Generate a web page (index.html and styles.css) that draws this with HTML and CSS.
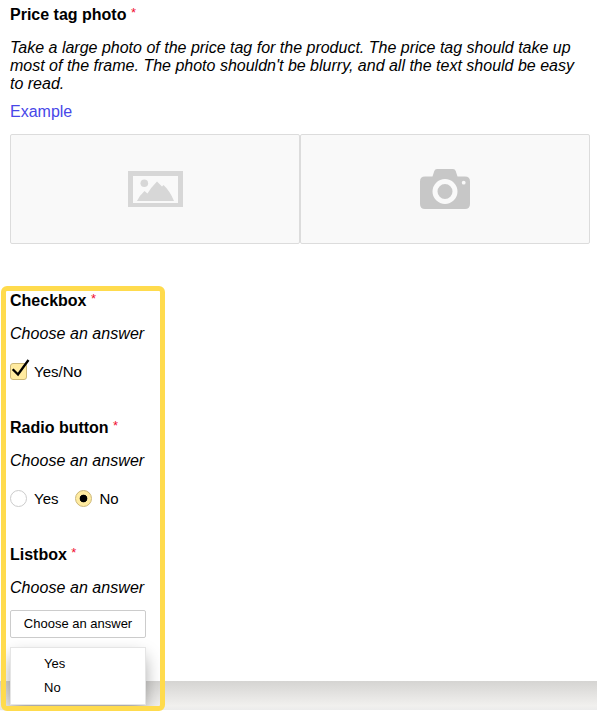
FILE: index.html
```
<!DOCTYPE html>
<html lang="en">
<head>
<meta charset="utf-8">
<title>Price tag photo</title>
<link rel="stylesheet" href="styles.css">
</head>
<body>
<main class="task">
  <section class="field">
    <h2 class="title">Price tag photo <span class="required">*</span></h2>
    <p class="hint">Take a large photo of the price tag for the product. The price tag should take up most of the frame. The photo shouldn't be blurry, and all the text should be easy to read.</p>
    <a class="example">Example</a>
    <div class="upload">
      <div class="tile">
        <svg width="55" height="36" viewBox="0 0 55 36">
          <path fill="#d7d7d7" fill-rule="evenodd" d="M0 0H55V36H0ZM5 5V32H50V5Z"/>
          <circle cx="16.3" cy="12.3" r="3.8" fill="#d7d7d7"/>
          <path fill="#d7d7d7" d="M9 30Q12 24 16.500 20L19.500 22.500Q23 16.500 29 10.500L34 15.500L35.500 14Q42 20 46 30Z"/>
        </svg>
      </div>
      <div class="tile">
        <svg width="50" height="40" viewBox="0 0 50 40">
          <path fill="#c7c7c7" d="M17 0H33Q35 0 35.700 2L37.500 7.500H45Q50 7.500 50 12.500V35Q50 40 45 40H5Q0 40 0 35V12.500Q0 7.500 5 7.500H12.500L14.300 2Q15 0 17 0Z"/>
          <circle cx="25" cy="22.500" r="10" fill="none" stroke="#f9f9f9" stroke-width="5"/>
          <circle cx="43.700" cy="13.700" r="1.900" fill="#f9f9f9"/>
        </svg>
      </div>
    </div>
  </section>

  <div class="questions">
    <section class="field question">
      <h2 class="title">Checkbox <span class="required">*</span></h2>
      <p class="hint">Choose an answer</p>
      <div class="options">
        <label class="option"><span class="box"><svg class="tick" width="20" height="22" viewBox="0 0 20 22"><path d="M2.700 10.300L8 15.500L18.500 1" fill="none" stroke="#000" stroke-width="2.300"/></svg></span>Yes/No</label>
      </div>
    </section>
    <section class="field question">
      <h2 class="title">Radio button <span class="required">*</span></h2>
      <p class="hint">Choose an answer</p>
      <div class="options">
        <label class="option"><span class="radio"></span>Yes</label>
        <label class="option"><span class="radio checked"></span>No</label>
      </div>
    </section>
    <section class="field question">
      <h2 class="title">Listbox <span class="required">*</span></h2>
      <p class="hint">Choose an answer</p>
      <div class="select">Choose an answer
        <ul class="menu">
          <li>Yes</li>
          <li>No</li>
        </ul>
      </div>
    </section>
  </div>
</main>
<footer class="strip"></footer>
</body>
</html>
```
FILE: styles.css
```
*,
*::after {
  box-sizing: border-box;
}

body {
  margin: 0;
  height: 711px;
  overflow: hidden;
  background: #fff;
  color: #000;
  font: 16px/18px "Liberation Sans", Arial, sans-serif;
}

.task {
  height: 681px;
  padding: 6px 7px 0 10px;
}

.title {
  margin: 0 0 15px;
  font-size: 16px;
  line-height: 18px;
  font-weight: bold;
}

.required {
  color: #f01030;
  font-size: 13px;
  font-weight: normal;
  line-height: 1;
  vertical-align: 3px;
}

.hint {
  margin: 0;
  font-style: italic;
}

.question .hint {
  letter-spacing: 0.05px;
}

.example {
  display: block;
  margin-top: 10px;
  color: #4747e8;
}

.upload {
  display: flex;
  width: 580px;
  margin: 13px 0 0 0;
}

.tile {
  display: flex;
  flex: 1;
  align-items: center;
  justify-content: center;
  height: 110px;
  border: 1px solid #dcdcdc;
  border-radius: 2px;
  background: #f9f9f9;
}

.questions {
  position: relative;
  width: 146px;
  margin-top: 48px;
}

.questions::after {
  content: "";
  position: absolute;
  z-index: 3;
  left: -9px;
  top: -6px;
  width: 164px;
  height: 425px;
  border: 5px solid #ffdb4d;
  border-radius: 6px;
}

.question {
  height: 127px;
}

.options {
  display: flex;
  gap: 17px;
  margin-top: 20px;
}

.option {
  display: flex;
  align-items: flex-start;
  gap: 7px;
  font-size: 15px;
}

.box,
.radio {
  position: relative;
  width: 17px;
  height: 17px;
  border: 1px solid #ccc;
  border-radius: 50%;
}

.box {
  border-color: #ccb777;
  border-radius: 3px;
  background: #ffeba0;
}

.tick {
  position: absolute;
  left: -1px;
  top: -5px;
}

.checked {
  border-color: #ccb777;
  background: radial-gradient(circle, #000 3.5px, #ffeba0 4.2px);
}

.select {
  position: relative;
  width: 136px;
  height: 28px;
  margin-top: 13px;
  border: 1px solid #ccc;
  border-radius: 2px;
  font-size: 13px;
  line-height: 26px;
  text-align: center;
}

.menu {
  position: absolute;
  z-index: 2;
  left: -1px;
  top: 36px;
  width: 136px;
  height: 58px;
  margin: 0;
  padding: 4px 0 0 33px;
  border: 1px solid #e5e5e5;
  background: #fff;
  box-shadow: 0 8px 18px -2px rgba(0, 0, 0, .4);
  list-style: none;
  text-align: left;
  line-height: 24px;
}

.strip {
  height: 29px;
  background: linear-gradient(#d5d4d2, #f1f0ee 85%, #ececec);
}
```
